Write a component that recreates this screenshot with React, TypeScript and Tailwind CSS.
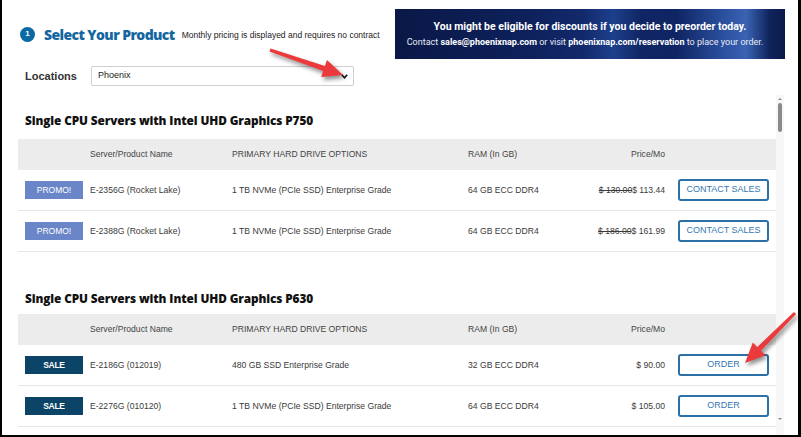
import React from 'react';

type Pt = [number, number];

// polygon for a flat red arrow from tail to tip
function arrowPoints(tail: Pt, tip: Pt, shaft = 2.6, head = 9, headLen = 20) {
    const dx = tip[0] - tail[0];
    const dy = tip[1] - tail[1];
    const len = Math.hypot(dx, dy);
    const ux = dx / len, uy = dy / len;
    const nx = -uy, ny = ux;
    const bx = tip[0] - ux * headLen, by = tip[1] - uy * headLen;
    const pts: Pt[] = [
        [tail[0] + nx * shaft * 0.6, tail[1] + ny * shaft * 0.6],
        [bx + nx * shaft, by + ny * shaft],
        [bx + nx * head, by + ny * head],
        tip,
        [bx - nx * head, by - ny * head],
        [bx - nx * shaft, by - ny * shaft],
        [tail[0] - nx * shaft * 0.6, tail[1] - ny * shaft * 0.6],
    ];
    return pts.map(p => p.join(',')).join(' ');
}

const cols = 'grid grid-cols-[72px_142px_236px_120px_77px_1fr] items-center';

type Row = {
    badge: 'PROMO!' | 'SALE';
    name: string;
    drive: string;
    ram: string;
    oldPrice?: string;
    price: string;
    action: string;
};

const p750: Row[] = [
    { badge: 'PROMO!', name: 'E-2356G (Rocket Lake)', drive: '1 TB NVMe (PCIe SSD) Enterprise Grade', ram: '64 GB ECC DDR4', oldPrice: '$ 130.00', price: '$ 113.44', action: 'CONTACT SALES' },
    { badge: 'PROMO!', name: 'E-2388G (Rocket Lake)', drive: '1 TB NVMe (PCIe SSD) Enterprise Grade', ram: '64 GB ECC DDR4', oldPrice: '$ 186.00', price: '$ 161.99', action: 'CONTACT SALES' },
];

const p630: Row[] = [
    { badge: 'SALE', name: 'E-2186G (012019)', drive: '480 GB SSD Enterprise Grade', ram: '32 GB ECC DDR4', price: '$ 90.00', action: 'ORDER' },
    { badge: 'SALE', name: 'E-2276G (010120)', drive: '1 TB NVMe (PCIe SSD) Enterprise Grade', ram: '64 GB ECC DDR4', price: '$ 105.00', action: 'ORDER' },
];

const ProductTable: React.FC<{ rows: Row[] }> = ({ rows }) => (
    <div className="w-[758px] text-[8.6px] text-[#3a3a3a] font-['Liberation_Sans',Arial,sans-serif]">
        <div className={`${cols} h-[31px] bg-[#ececec] text-[#444]`}>
            <div />
            <div>Server/Product Name</div>
            <div>PRIMARY HARD DRIVE OPTIONS</div>
            <div>RAM (In GB)</div>
            <div className="text-right">Price/Mo</div>
            <div />
        </div>
        {rows.map(r => (
            <div key={r.name} className={`${cols} h-[41px] border-b border-[#e6e6e6]`}>
                <div className="pl-[7px]">
                    <div className={`w-[58px] h-[18px] flex items-center justify-center text-white text-[8.5px] ${r.badge === 'SALE' ? 'bg-[#0b4466] font-bold tracking-[-0.3px]' : 'bg-[#6b86c8]'}`}>
                        {r.badge}
                    </div>
                </div>
                <div>{r.name}</div>
                <div>{r.drive}</div>
                <div>{r.ram}</div>
                <div className="text-right whitespace-nowrap">
                    {r.oldPrice && <span className="line-through">{r.oldPrice}</span>}
                    {r.price}
                </div>
                <div className="pl-[13px]">
                    <button className="w-[91px] h-[22px] border-2 border-[#2c70a6] rounded-[3px] bg-white text-[#3378b3] text-[9px]">
                        {r.action}
                    </button>
                </div>
            </div>
        ))}
    </div>
);

export default function App() {
    return (
        <div className="relative w-[801px] h-[437px] overflow-hidden bg-white border-l-2 border-r-[3px] border-b-2 border-black flex flex-col">
            {/* header */}
            <div className="h-[95px] flex shrink-0">
                <div className="pl-[18px] pt-[26px] shrink-0 whitespace-nowrap">
                    <div className="flex items-center h-[16px]">
                        <div className="w-[15px] h-[15px] rounded-full bg-[#0b69a3] flex items-center justify-center text-white text-[8px] font-bold font-['Liberation_Sans',Arial,sans-serif]">1</div>
                        <div className="ml-[9px] text-[14px] font-extrabold text-[#1466a0] tracking-[-0.6px] font-['Open_Sans',sans-serif]">Select Your Product</div>
                        <div className="ml-[7px] mt-[2px] text-[8.5px] text-[#222] font-['Liberation_Sans',Arial,sans-serif]">Monthly pricing is displayed and requires no contract</div>
                    </div>
                    <div className="flex items-center mt-[24px] pl-[5px]">
                        <div className="w-[66px] text-[11px] font-bold text-[#333] font-['Liberation_Sans',Arial,sans-serif]">Locations</div>
                        <div className="w-[263px] h-[20px] border border-[#cfcfcf] rounded-[2px] flex items-center pl-[6px] pr-[5px] text-[9px] text-[#222] font-['Liberation_Sans',Arial,sans-serif]">
                            <span className="flex-1">Phoenix</span>
                            <svg width="7" height="5" viewBox="0 0 7 5"><path d="M0.8 0.8 L3.5 3.8 L6.2 0.8" fill="none" stroke="#111" strokeWidth="1.6" /></svg>
                        </div>
                    </div>
                </div>
                <div className="ml-auto mr-[13px] mt-[9px] w-[390px] h-[50px] shrink-0 flex flex-col items-center justify-center text-white font-['Roboto',sans-serif] bg-[linear-gradient(90deg,#0a1846_0%,#0e215c_35%,#12296b_48%,#1d3f8c_56%,#102664_63%,#0f2462_72%,#2a4f9e_84%,#3a63b3_90%,#10245d_96%,#0a1a48_100%)]">
                    <div className="text-[10.5px] font-bold leading-[13px]">You might be eligible for discounts if you decide to preorder today.</div>
                    <div className="text-[9px] leading-[12px] mt-[3px] mr-[10px] text-[#e8ecf5]">
                        Contact <b className="text-white">sales@phoenixnap.com</b> or visit <b className="text-white">phoenixnap.com/reservation</b> to place your order.
                    </div>
                </div>
            </div>

            {/* scroll area */}
            <div className="flex-1 flex min-h-0 pl-[16px]">
                <div className="w-[758px] overflow-hidden">
                    <div className="mt-[17px] mb-[11px] pl-[7px] h-[16px] leading-[16px] text-[11.8px] font-extrabold text-[#111] font-['Open_Sans',sans-serif] tracking-[-0.1px]">Single CPU Servers with Intel UHD Graphics P750</div>
                    <ProductTable rows={p750} />
                    <div className="mt-[38px] mb-[8px] pl-[7px] h-[16px] leading-[16px] text-[11.8px] font-extrabold text-[#111] font-['Open_Sans',sans-serif] tracking-[-0.1px]">Single CPU Servers with Intel UHD Graphics P630</div>
                    <ProductTable rows={p630} />
                </div>
                <div className="w-[8px] bg-[#f7f7f7] flex flex-col items-center">
                    <div className="mt-[3px] w-0 h-0 border-l-[2px] border-r-[2px] border-b-[2px] border-transparent border-b-[#888]" />
                    <div className="mt-[3px] w-[4px] h-[29px] rounded-full bg-[#8a8a8a]" />
                    <div className="mt-auto mb-[15px] w-0 h-0 border-l-[2px] border-r-[2px] border-t-[2px] border-transparent border-t-[#888]" />
                </div>
            </div>

            {/* annotation arrows */}
            <svg className="absolute left-[-2px] top-0 pointer-events-none drop-shadow-[2px_3px_2px_rgba(0,0,0,0.45)]" width="801" height="437">
                <polygon points={arrowPoints([270, 50], [343, 75])} fill="#ec3a3c" />
                <polygon points={arrowPoints([795, 313], [745, 363])} fill="#ec3a3c" />
            </svg>
        </div>
    );
}
